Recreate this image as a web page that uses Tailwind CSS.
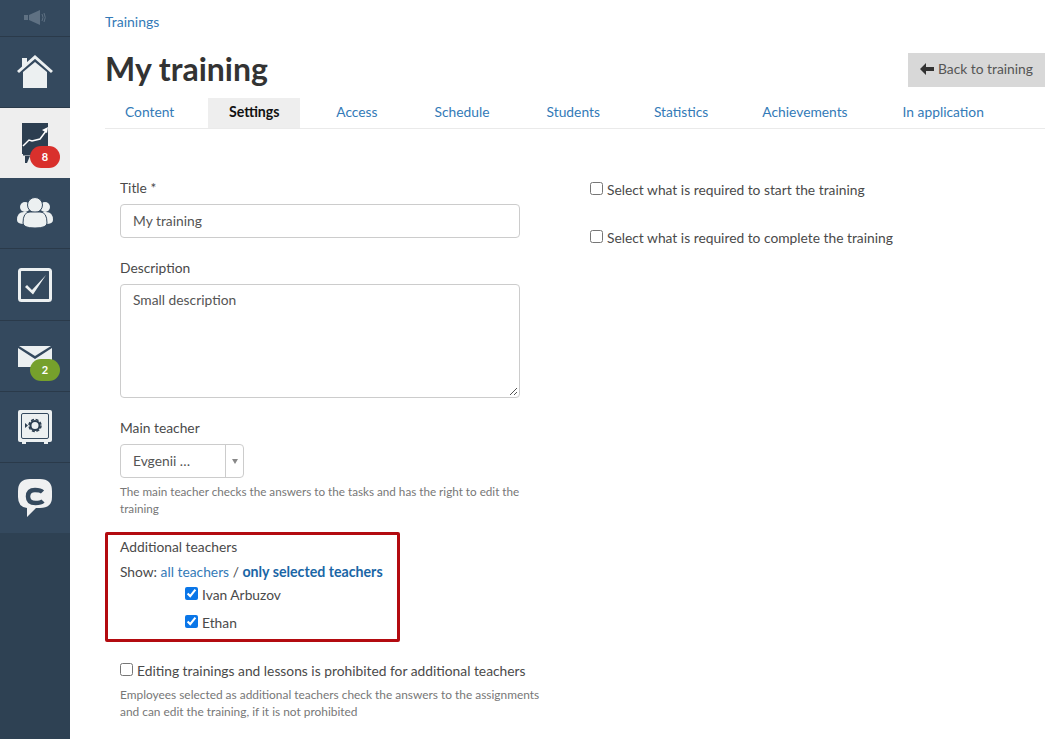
<!DOCTYPE html>
<html lang="en"><head><meta charset="utf-8"><title>My training</title>
<script src="https://cdn.jsdelivr.net/npm/@tailwindcss/browser@4"></script></head>
<body class="bg-white font-['Lato','Liberation_Sans',sans-serif] text-[13.8px] text-[#4a4a4a]">
<div class="flex h-[739px] w-[1054px] overflow-hidden">
<nav class="w-[70px] shrink-0 flex flex-col">
  <div class="h-[37px] bg-[#34495e] border-b border-[#2a3a4a] flex items-center justify-center">
    <svg width="22" height="16" viewBox="0 0 22 16" fill="#5f7183"><rect x="0" y="5" width="4" height="5"/><path d="M5 5l11-5v15L5 10z"/><path d="M18 4q2 3.500 0 7" fill="none" stroke="#5f7183"/><path d="M20 3q2.500 4.500 0 9" fill="none" stroke="#5f7183"/></svg>
  </div>
  <div class="h-[71px] bg-[#34495e] border-b border-[#2a3a4a] flex items-center justify-center">
    <svg width="36" height="34" viewBox="0 0 36 34"><path d="M5 3h5v5l-5 5z" fill="#ecf0f1"/><path d="M1 17L18 2l17 15" fill="none" stroke="#ecf0f1" stroke-width="3"/><path d="M6 17L18 7l12 10v16H6z" fill="#ecf0f1"/></svg>
  </div>
  <div class="h-[70px] bg-[#eeeeee] relative flex justify-center pt-[15px]">
    <svg width="26" height="40" viewBox="0 0 26 40"><rect width="26" height="31" fill="#2c3e50"/><path d="M1 23l6-6 3 1 8-2 6-8" fill="none" stroke="#fff" stroke-width="1.500"/><path d="M20 7l6-3-1 6z" fill="#fff"/><path d="M1 31h25v1.500H1z" fill="#2c3e50"/><path d="M3 33h5l-3 7H3z" fill="#2c3e50"/></svg>
    <span class="absolute left-[30px] top-[38px] w-[30px] h-[22px] rounded-full bg-[#d9302c] text-white text-[11px] font-bold flex items-center justify-center">8</span>
  </div>
  <div class="h-[71px] bg-[#34495e] border-b border-[#2a3a4a] flex items-center justify-center">
    <svg width="36" height="32" viewBox="0 0 36 32" fill="#ecf0f1"><circle cx="8" cy="10" r="5"/><circle cx="28" cy="10" r="5"/><path d="M0 23q0-8 7-8h22q7 0 7 8 0 4-7 4H7q-7 0-7-4z"/><circle cx="18" cy="8" r="7.500" stroke="#34495e"/><path d="M6 26q0-11 7-11h10q7 0 7 11 0 5-12 5T6 26z" stroke="#34495e"/></svg>
  </div>
  <div class="h-[72px] bg-[#34495e] border-b border-[#2a3a4a] flex items-center justify-center">
    <svg width="34" height="34" viewBox="0 0 34 34"><rect x="1.500" y="1.500" width="31" height="31" rx="2" fill="none" stroke="#ecf0f1" stroke-width="3"/><path d="M7 19l2-2 5 5L28 7 15 26.500z" fill="#ecf0f1"/></svg>
  </div>
  <div class="h-[71px] bg-[#34495e] border-b border-[#2a3a4a] relative flex justify-center pt-[25px]">
    <svg width="34" height="21" viewBox="0 0 34 21"><path d="M0 2l17 11L34 2v19H0z" fill="#ecf0f1"/><path d="M1 0h32L17 10z" fill="#ecf0f1"/></svg>
    <span class="absolute left-[30px] top-[38px] w-[30px] h-[22px] rounded-full bg-[#76a02c] text-white text-[11px] font-bold flex items-center justify-center">2</span>
  </div>
  <div class="h-[71px] bg-[#34495e] border-b border-[#2a3a4a] flex items-center justify-center">
    <svg width="34" height="34" viewBox="0 0 34 34"><rect width="34" height="32" rx="2" fill="#ecf0f1"/><rect x="3.500" y="3.500" width="27" height="25" rx="1.500" fill="none" stroke="#34495e"/><path d="M4 32h4v2H4zM26 32h4v2h-4z" fill="#ecf0f1"/><circle cx="17" cy="15.500" r="4.500" fill="none" stroke="#2c3e50" stroke-width="2"/><circle cx="17" cy="15.500" r="6" fill="none" stroke="#2c3e50" stroke-width="1.500" stroke-dasharray="3 1.700"/><path d="M7 13l3 2.500-3 2.500z" fill="#2c3e50"/></svg>
  </div>
  <div class="h-[70px] bg-[#34495e] flex items-center justify-center">
    <svg width="34" height="38" viewBox="0 0 34 38"><path d="M12 0h10q12 0 12 12v6q0 11-12 11h-4l-9 9V29Q0 28 0 18v-6Q0 0 12 0z" fill="#eff0f1"/><path d="M24.500 13q-2-2-7.500-2-7 0-7 6.500T17.500 24q5.500 0 7.500-2" fill="none" stroke="#34495e" stroke-width="4.500"/></svg>
  </div>
  <div class="flex-1 bg-[#2e4153]"></div>
</nav>
<main class="w-[975px] pl-[35px]">
  <div class="pt-[13px] text-[14px] text-[#337ab7] leading-[17px]">Trainings</div>
  <div class="flex justify-between items-start mt-[23px]">
    <h1 class="text-[32px] font-bold text-[#333] leading-[40px] mt-[-4px]">My training</h1>
    <button class="w-[137px] h-[34px] pb-[2px] bg-[#d8d8d8] text-[#555] flex items-center justify-center gap-[4px]"><svg width="14" height="12" viewBox="0 0 14 12" fill="#333"><path d="M0 6l6-6v4h8v4H6v4z"/></svg>Back to training</button>
  </div>
  <div class="flex h-[31px] mt-[9px] border-b border-[#eaeaea] text-[#337ab7]">
    <a class="px-5 pb-[2px] flex items-center">Content</a>
    <a class="ml-[14px] w-[92px] pb-[2px] bg-[#eeeeee] text-[#111] text-[14.2px] font-bold flex items-center justify-center">Settings</a>
    <a class="ml-[16px] px-5 pb-[2px] flex items-center">Access</a>
    <a class="ml-[17px] px-5 pb-[2px] flex items-center">Schedule</a>
    <a class="ml-[17px] px-5 pb-[2px] flex items-center">Students</a>
    <a class="ml-[14px] px-5 pb-[2px] flex items-center">Statistics</a>
    <a class="ml-[14px] px-5 pb-[2px] flex items-center">Achievements</a>
    <a class="ml-[15px] px-5 pb-[2px] flex items-center">In application</a>
  </div>
  <div class="flex">
    <section class="w-[470px] shrink-0">
      <div class="pl-[15px] pt-[50px]">
        <label class="block leading-[17px]">Title *</label>
        <div class="mt-[8px] w-[400px] h-[34px] border border-[#ccc] rounded-[4px] px-[12px] flex items-center text-[#555]">My training</div>
        <label class="block leading-[17px] mt-[21px]">Description</label>
        <div class="mt-[8px] w-[400px] h-[114px] border border-[#ccc] rounded-[4px] px-[12px] py-[5px] text-[#555] relative">Small description
          <svg class="absolute right-[1px] bottom-[1px]" width="9" height="9" viewBox="0 0 9 9" stroke="#555"><path d="M1 8l7-7M5 8l3-3"/></svg></div>
        <label class="block leading-[17px] mt-[21px]">Main teacher</label>
        <div class="mt-[8px] w-[124px] h-[34px] border border-[#ccc] rounded-[4px] flex items-center text-[#555]">
          <span class="w-[105px] pl-[12px] border-r border-[#ccc] h-full flex items-center">Evgenii …</span>
          <svg class="ml-[6px]" width="6" height="6" viewBox="0 0 6 6" fill="#888"><path d="M0 1h6L3 6z"/></svg></div>
        <p class="mt-[5px] text-[11.7px] leading-[17px] text-[#777] w-[405px]">The main teacher checks the answers to the tasks and has the right to edit the training</p>
      </div>
      <div class="mt-[15px] w-[295px] h-[110px] border-[3px] border-[#b30b10] rounded-[2px] pl-[12px] pt-[3px]">
        <div class="leading-[17px]">Additional teachers</div>
        <div class="mt-[8px] leading-[17px]">Show: <a class="text-[#337ab7]">all teachers</a> / <a class="text-[#1a66a6] text-[14.2px] font-bold">only selected teachers</a></div>
        <label class="flex items-center gap-[4px] pl-[65px] mt-[7px] h-[17px]"><input type="checkbox" checked class="w-[13px] h-[13px] accent-[#0a76e8] mt-[-4px]">Ivan Arbuzov</label>
        <label class="flex items-center gap-[4px] pl-[65px] mt-[11px] h-[17px]"><input type="checkbox" checked class="w-[13px] h-[13px] accent-[#0a76e8] mt-[-4px]">Ethan</label>
      </div>
      <div class="pl-[15px]">
        <label class="flex items-center gap-[4px] mt-[21px] h-[17px]"><input type="checkbox" class="w-[13px] h-[13px] mt-[-4px]">Editing trainings and lessons is prohibited for additional teachers</label>
        <p class="mt-[6px] text-[11.9px] leading-[17px] text-[#777] w-[425px]">Employees selected as additional teachers check the answers to the assignments and can edit the training, if it is not prohibited</p>
      </div>
    </section>
    <section class="pl-[15px] pt-[53px]">
      <label class="flex items-center gap-[4px] h-[17px]"><input type="checkbox" class="w-[13px] h-[13px] mt-[-4px]">Select what is required to start the training</label>
      <label class="flex items-center gap-[4px] h-[17px] mt-[31px]"><input type="checkbox" class="w-[13px] h-[13px] mt-[-4px]">Select what is required to complete the training</label>
    </section>
  </div>
</main>
</div>
</body></html>
